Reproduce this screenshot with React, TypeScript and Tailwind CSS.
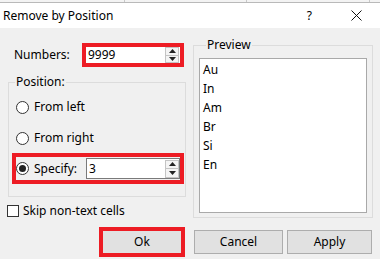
import React from 'react';

const font = { fontFamily: '"Segoe UI", "Noto Sans", "Liberation Sans", sans-serif' };

const Spinner = () => (
  <div className="flex h-full w-[14px] flex-col border border-[#c4c4c4] bg-[#f4f4f4]">
    <div className="flex flex-1 items-center justify-center border-b border-[#c4c4c4]">
      <svg width="7" height="4" viewBox="0 0 7 4"><path d="M0 4 L3.5 0 L7 4 Z" fill="#222" /></svg>
    </div>
    <div className="flex flex-1 items-center justify-center">
      <svg width="7" height="4" viewBox="0 0 7 4"><path d="M0 0 L3.5 4 L7 0 Z" fill="#222" /></svg>
    </div>
  </div>
);

const Radio = ({ checked }: { checked?: boolean }) => (
  <div className="flex h-[13px] w-[13px] items-center justify-center rounded-full border border-[#333] bg-white">
    {checked && <div className="h-[7px] w-[7px] rounded-full bg-[#222]" />}
  </div>
);

const items = ['Au', 'In', 'Am', 'Br', 'Si', 'En'];

export default function App() {
  return (
    <div className="h-[259px] w-[380px] overflow-hidden bg-[#f0f0f0] text-[12px] leading-[14px] text-black" style={font}>
      {/* bit of the sheet behind the dialog */}
      <div className="flex h-[3px] border-b border-[#b9b9b9] bg-[#f3f3f3]">
        <div className="w-[125px] border-r border-[#c8c8c8]" />
        <div className="w-[122px] border-r border-[#c8c8c8]" />
        <div className="w-[123px] border-r border-[#c8c8c8]" />
      </div>

      {/* title bar */}
      <div className="flex h-[25px] items-center bg-white pl-[3px]">
        <span className="flex-1 text-[12px]">Remove by Position</span>
        <span className="mr-[39px] text-[12px]">?</span>
        <svg className="mr-[18px]" width="11" height="11" viewBox="0 0 11 11">
          <path d="M0.5 0.5 L10.5 10.5 M10.5 0.5 L0.5 10.5" stroke="#111" strokeWidth="1" />
        </svg>
      </div>

      <div className="flex pl-[8px] pr-[7px]">
        {/* left column */}
        <div className="flex w-[178px] flex-col">
          <div className="mt-[15px] flex h-[24px] items-center">
            <span className="w-[74px] pl-[6px]">Numbers:</span>
            <div className="flex h-[24px] w-[102px] items-center border-4 border-[#ed1c24] bg-white">
              <span className="flex-1 pl-[2px]">9999</span>
              <div className="h-[16px] pr-px">
                <Spinner />
              </div>
            </div>
          </div>

          <fieldset className="mt-[8px] border border-[#dcdcdc] pb-[12px]">
            <legend className="ml-[6px] px-px leading-[14px]">Position:</legend>
            <div className="mt-[8px] flex h-[20px] items-center gap-[5px] pl-[7px]">
              <Radio />
              <span>From left</span>
            </div>
            <div className="mt-[11px] flex h-[20px] items-center gap-[5px] pl-[7px]">
              <Radio />
              <span>From right</span>
            </div>
            <div className="ml-[3px] mr-px mt-[5px] flex h-[31px] items-center border-4 border-[#ed1c24]">
              <Radio checked />
              <span className="ml-[5px] w-[52px]">Specify:</span>
              <div className="flex h-[21px] flex-1 items-center border border-[#7a7a7a] bg-white">
                <span className="flex-1 pl-[2px]">3</span>
                <div className="h-[18px]">
                  <Spinner />
                </div>
              </div>
            </div>
          </fieldset>

          <div className="-ml-px mt-[8px] flex h-[12px] items-center gap-[4px]">
            <div className="h-[12px] w-[12px] border border-[#333] bg-white" />
            <span>Skip non-text cells</span>
          </div>
        </div>

        {/* preview */}
        <fieldset className="ml-[7px] mt-[10px] flex-1 border border-[#dcdcdc] px-[5px] pb-[4px]">
          <legend className="ml-[7px] px-px leading-[14px]">Preview</legend>
          <div className="mt-[6px] h-[155px] border border-[#a9a9a9] bg-white pl-[3px] pt-px">
            {items.map((t) => (
              <div key={t} className="h-[19px] leading-[19px]">
                {t}
              </div>
            ))}
          </div>
        </fieldset>
      </div>

      {/* buttons */}
      <div className="mt-[9px] flex items-center justify-end pr-[8px]">
        <div className="flex h-[30px] w-[86px] border-4 border-[#ed1c24] bg-[#e1e1e1]">
          <span className="m-auto">Ok</span>
        </div>
        <button className="ml-[9px] h-[24px] w-[89px] border border-[#adadad] bg-[#e1e1e1]">Cancel</button>
        <button className="ml-[4px] h-[24px] w-[85px] border border-[#adadad] bg-[#e1e1e1]">Apply</button>
      </div>
    </div>
  );
}
